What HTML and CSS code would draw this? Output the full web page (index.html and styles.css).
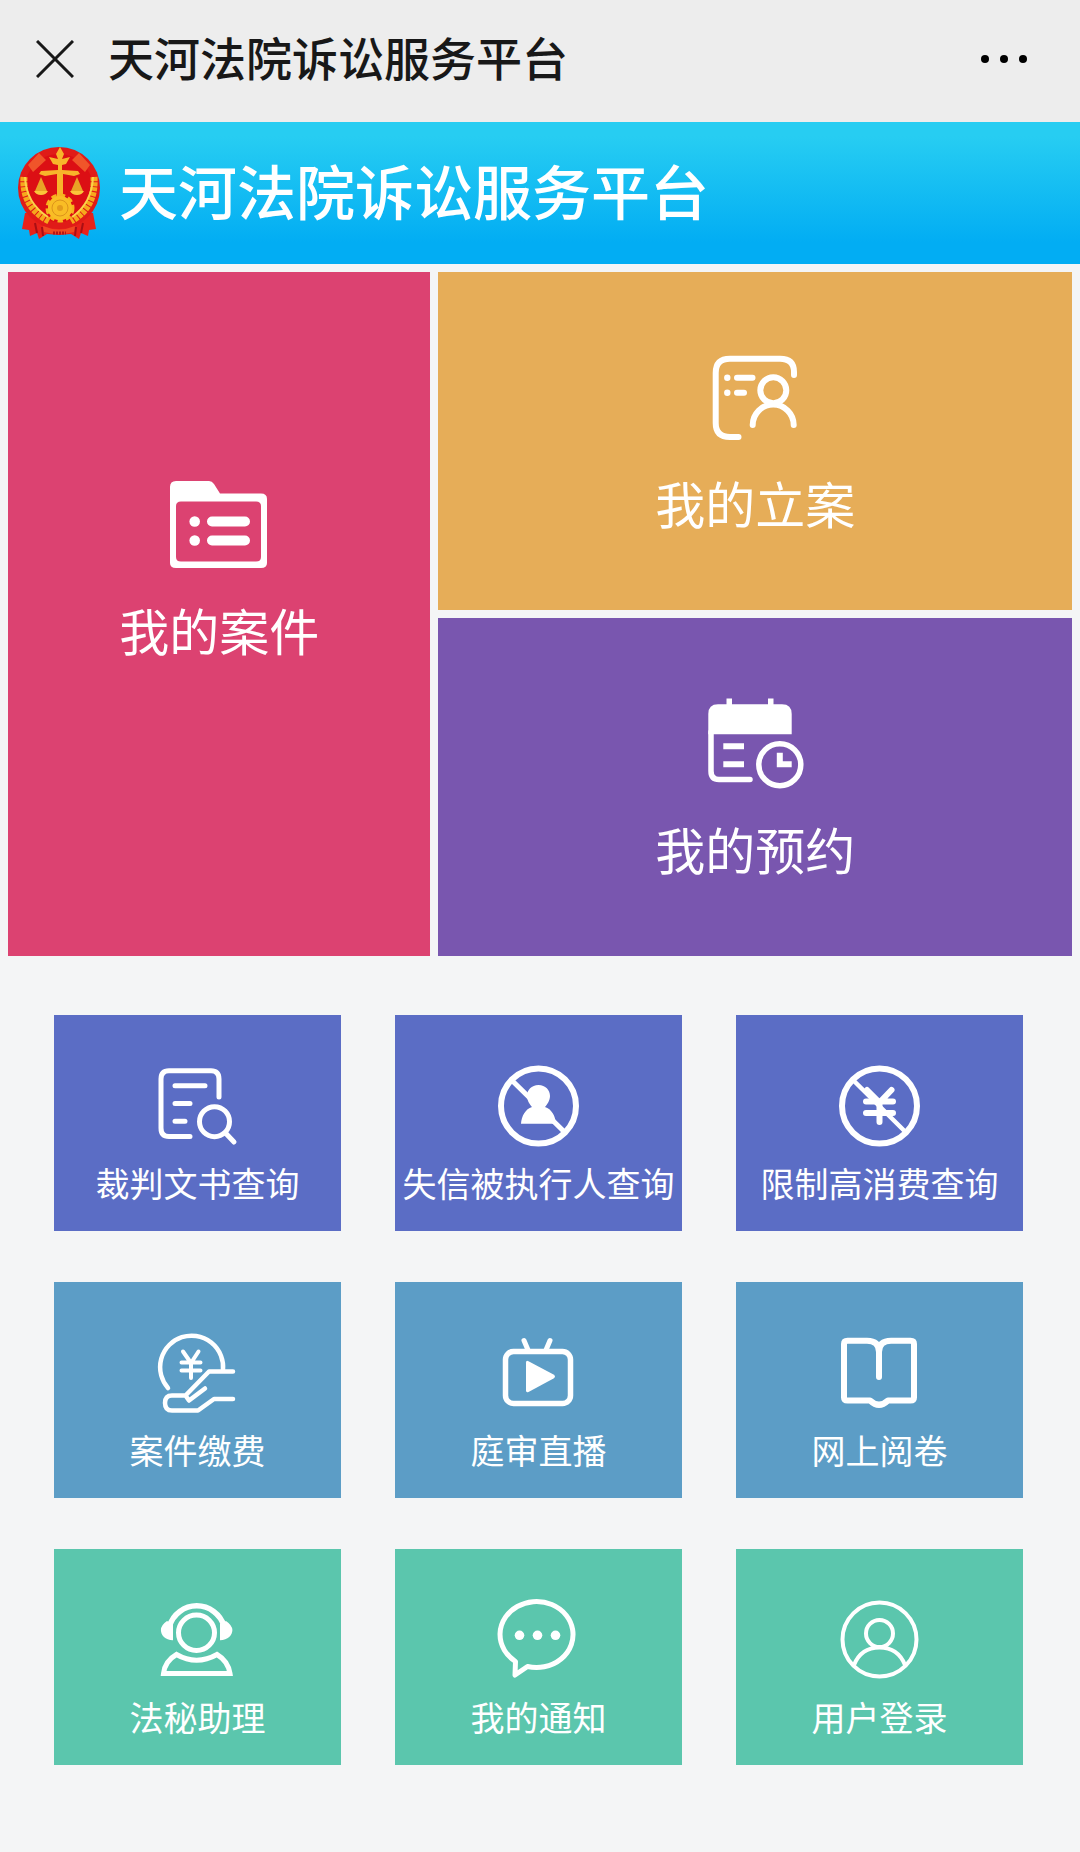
FILE: index.html
```html
<!DOCTYPE html>
<html lang="zh-CN">
<head>
  <meta charset="UTF-8">
  <meta name="viewport" content="width=device-width, initial-scale=1.0">
  <title>天河法院诉讼服务平台</title>
  <link rel="stylesheet" href="styles.css">
</head>
<body>
  <header class="topbar">
    <button type="button" class="btn-close" aria-label="关闭">
      <svg width="38" height="38" viewBox="0 0 38 38"><path d="M1 1L37 37M37 1L1 37"/></svg>
    </button>
    <h1>天河法院诉讼服务平台</h1>
    <button type="button" class="btn-more" aria-label="更多">
      <svg width="48" height="10" viewBox="0 0 48 10"><circle cx="5" cy="5" r="4"/><circle cx="24" cy="5" r="4"/><circle cx="43" cy="5" r="4"/></svg>
    </button>
  </header>

  <div class="banner">
    <svg class="emblem" width="84" height="96" viewBox="0 0 84 96">
      <path d="M8 68L5 84L12 85L13 91L20 88L22 94L30 89L42 90L54 89L62 94L64 88L71 91L72 85L79 84L76 68Z" fill="#e8221a"/>
      <path d="M18 78L20 88M25 82L26 91M66 78L64 88M59 82L58 91" stroke="#a90f14" stroke-width="2"/>
      <circle cx="42" cy="43" r="41" fill="#e01b18"/>
      <circle cx="42" cy="43" r="34" fill="#dc0f14"/>
      <path d="M11 20L22 8L29 15L16 27ZM73 20L62 8L55 15L68 27Z" fill="#f0552a"/>
      <path d="M7 32Q5 62 32 76" fill="none" stroke="#f6a81c" stroke-width="7" stroke-dasharray="4 1"/>
      <path d="M77 32Q79 62 54 76" fill="none" stroke="#f6a81c" stroke-width="7" stroke-dasharray="4 1"/>
      <path d="M8 32Q9 58 31 72M76 32Q75 58 55 72" fill="none" stroke="#fbd24a" stroke-width="2"/>
      <path d="M43 2L47 9L45 14L53 12L49 19L45 20V25L61 26L63 29L57 31L46 29V52H40V29L28 31L22 29L24 26L41 25V20L36 19L32 12L41 14L39 9Z" fill="#f8b52a"/>
      <path d="M24 32L30 46H18ZM60 32L66 46H54Z" fill="#e9a326"/>
      <path d="M17 46H31Q29 50 24 50Q19 50 17 46ZM53 46H67Q65 50 60 50Q55 50 53 46Z" fill="#fbc63a"/>
      <circle cx="43" cy="63" r="12" fill="#f7b31f" stroke="#f7b31f" stroke-width="5" stroke-dasharray="5 3"/>
      <circle cx="43" cy="63" r="12" fill="#f9bd25"/>
      <circle cx="43" cy="63" r="8" fill="none" stroke="#dd941b" stroke-width="1"/>
      <circle cx="43" cy="63" r="3" fill="#e39c1c"/>
      <path d="M26 81Q42 88 58 81L57 87Q42 91 27 87Z" fill="#f04a22"/>
      <path d="M36 88H49" stroke="#b51515" stroke-width="3" stroke-dasharray="2 1"/>
    </svg>
    <p class="banner-title">天河法院诉讼服务平台</p>
  </div>

  <main>
    <nav class="main-tiles">
      <a href="#" class="tile tile-case">
        <svg class="icon" viewBox="0 0 100 100">
          <path class="fill" fill-rule="evenodd" d="M7 6H40Q43 6 45 9L51 18.5H92Q98 18.5 98 24V88Q98 93 92 93H7Q1 93 1 88V12Q1 6 7 6ZM12 26.5Q7 26.5 7 31V82Q7 86.5 12 86.5H87Q92 86.5 92 82V31Q92 26.5 87 26.5Z"/>
          <circle class="fill" cx="25.7" cy="46.5" r="5.3"/><circle class="fill" cx="25.7" cy="65.5" r="5.3"/>
          <path d="M43 46.5H76M43 65.5H76" stroke-width="10"/>
        </svg>
        <span>我的案件</span>
      </a>
      <a href="#" class="tile tile-filing">
        <svg class="icon" viewBox="0 0 100 100" stroke-width="6">
          <path d="M89 27V24Q89 10.7 75 10.7H25Q10.7 10.7 10.7 25V75Q10.7 89 25 89H33.5"/>
          <circle class="fill" cx="22.3" cy="29.7" r="3.2"/><circle class="fill" cx="22.3" cy="44.7" r="3.2"/>
          <path d="M32 29.7H47.5M32 44.7H39"/>
          <circle cx="68.3" cy="42.2" r="13"/>
          <path d="M47.7 77A20.5 20.5 0 0 1 88.7 77"/>
        </svg>
        <span>我的立案</span>
      </a>
      <a href="#" class="tile tile-booking">
        <svg class="icon" viewBox="0 0 100 100" stroke-width="5.5">
          <path class="fill" d="M3.3 40.3V20Q3.3 10.3 13 10.3H21.5V4.5H27V10.3H63V4.5H68.5V10.3H77Q86.7 10.3 86.7 20V40.3Z"/>
          <path d="M6 38V77Q6 85.5 14 85.5H45"/>
          <path d="M18.3 52.3H39M18.3 70.3H39M74.8 58.7V70.3H86.7" stroke-width="6" stroke-linecap="butt" stroke-linejoin="miter"/>
          <circle cx="74.8" cy="70.7" r="21"/>
        </svg>
        <span>我的预约</span>
      </a>
    </nav>

    <nav class="services">
      <a href="#" class="service query">
        <svg class="icon" viewBox="0 0 100 100" stroke-width="5">
          <path d="M71 41V23Q71 14.8 63 14.8H21Q13 14.8 13 23V72Q13 80.5 21 80.5H42"/>
          <path d="M27 29.8H57M27 47.5H42M27 65.2H37"/>
          <circle cx="66.5" cy="65.7" r="15"/><path d="M77.5 77L86 86"/>
        </svg>
        <span>裁判文书查询</span>
      </a>
      <a href="#" class="service query">
        <svg class="icon" viewBox="0 0 100 100" stroke-width="6">
          <circle cx="49.5" cy="50" r="37.5"/>
          <path d="M23 24.5L75.5 76" stroke-width="5"/>
          <path class="fill" d="M49.5 29C56.5 29 61 34 61 40C61 45 57.5 49 56 51C62.5 53 66.5 60 67 67.8H32C32.500 60 36.500 53 43 51C41.500 49 38 45 38 40C38 34 42.500 29 49.500 29Z"/>
        </svg>
        <span>失信被执行人查询</span>
      </a>
      <a href="#" class="service query">
        <svg class="icon" viewBox="0 0 100 100" stroke-width="6">
          <circle cx="49.5" cy="50" r="37.5"/>
          <path d="M23.5 24.5L75 75.500" stroke-width="4.5"/>
          <path d="M37 34L49.500 46.500L61.500 34M49.500 46.500V66M36 45.500H63M36 57H63" stroke-width="6"/>
        </svg>
        <span>限制高消费查询</span>
      </a>
      <a href="#" class="service online">
        <svg class="icon" viewBox="0 0 100 100" stroke-width="4.5">
          <path d="M20 65A31.5 31.5 0 1 1 75 47"/>
          <path d="M35 28.500L43 40L50.500 28.500M43 40V55M33.500 39.5H52.500M33.500 47.5H52.500" stroke-width="4"/>
          <path d="M85 48.500H61L37.500 72.500H24Q17 72.500 17 80Q17 87.500 24 87.500H50L66 76H85M57 65.500L41 77.500L37.500 72.500"/>
        </svg>
        <span>案件缴费</span>
      </a>
      <a href="#" class="service online">
        <svg class="icon" viewBox="0 0 100 100" stroke-width="5.5">
          <rect x="16.500" y="28.500" width="65" height="52" rx="8"/>
          <path d="M35 17.5L39 27M61 17.5L57 27" stroke-width="5"/>
          <path class="fill" d="M37 39.5Q37 37 39.5 38.2L64.5 51.5Q67.500 53.5 64.500 55.5L39.500 69Q37 70 37 67.500Z"/>
        </svg>
        <span>庭审直播</span>
      </a>
      <a href="#" class="service online">
        <svg class="icon" viewBox="0 0 100 100" stroke-width="6">
          <path d="M49 54V29Q49 17.8 37 17.8H17.5Q14 17.8 14 21V74.5Q14 77.5 17.5 77.5H40Q49 86 58 77.5H80.5Q84 77.5 84 74.5V21Q84 17.8 80.5 17.8H61Q49 17.8 49 29"/>
        </svg>
        <span>网上阅卷</span>
      </a>
      <a href="#" class="service help">
        <svg class="icon" viewBox="0 0 100 100" stroke-width="5">
          <path d="M21.5 36A28.500 28.500 0 0 1 76 36" stroke-width="5.5"/>
          <path class="fill" d="M25 50.3C17 50 12.900 45 12.900 40Q13 35 19 31L25 34ZM72 50.3C80 50 84.400 45 84.400 40Q84 35 78 31L72 34Z"/>
          <ellipse cx="48.5" cy="42.7" rx="18" ry="17.700"/>
          <path d="M15.500 83.500Q17 71 28.500 64.500Q48.500 76 69 64.500Q80 71 82 83.500Z" stroke-linejoin="miter"/>
        </svg>
        <span>法秘助理</span>
      </a>
      <a href="#" class="service help">
        <svg class="icon" viewBox="0 0 100 100" stroke-width="5">
          <path d="M26.5 71.5A36.5 33 0 1 1 38.5 76.500L26 85Z"/>
          <circle class="fill" cx="30.5" cy="45.3" r="4.8"/><circle class="fill" cx="48.5" cy="45.3" r="4.8"/><circle class="fill" cx="66.5" cy="45.3" r="4.8"/>
        </svg>
        <span>我的通知</span>
      </a>
      <a href="#" class="service help">
        <svg class="icon" viewBox="0 0 100 100" stroke-width="4">
          <circle cx="49.500" cy="49.5" r="37"/><circle cx="49.5" cy="43.5" r="13.500"/>
          <path d="M24 75Q31 57.500 49.500 57.500Q68 57.500 75 75"/>
        </svg>
        <span>用户登录</span>
      </a>
    </nav>
  </main>
</body>
</html>
```
FILE: styles.css
```css
* { box-sizing: border-box; }
body { margin: 0; background: #f4f5f6; font-family: "Noto Sans CJK SC", sans-serif; }
h1, p { margin: 0; }
a { color: #fff; text-decoration: none; }
button { border: 0; padding: 0; background: none; cursor: pointer; }
svg { display: block; flex-shrink: 0; }

.topbar { display: flex; align-items: center; height: 122px; padding: 0 52px 4px 36px; background: #ededed; }
.topbar h1 { flex: 1; margin-left: 34px; padding-bottom: 6px; font-size: 46px; font-weight: 500; line-height: 60px; color: #181818; }
.btn-close svg { fill: none; stroke: #181818; stroke-width: 3; }
.btn-more svg { fill: #000; }

.banner { display: flex; align-items: center; gap: 18px; height: 142px; padding: 0 17px; background: linear-gradient(#27cdf2 10%, #02adf3 85%); }
.banner-title { padding-bottom: 6px; color: #fff; font-size: 59px; font-weight: 500; line-height: 72px; }

/* icons */
.icon { width: 100px; height: 100px; fill: none; stroke: #fff; stroke-linecap: round; stroke-linejoin: round; }
.icon .fill { fill: #fff; stroke: none; }

.main-tiles { display: grid; grid-template-columns: 2fr 3fr; grid-auto-rows: 338px; gap: 8px; padding: 8px; }
.tile { display: flex; flex-direction: column; align-items: center; gap: 18px; padding-top: 76px; font-size: 50px; line-height: 72px; }
.tile-case { grid-row: span 2; padding-top: 203px; background: #dc4271; }
.tile-filing { background: #e6ad58; }
.tile-booking { background: #7956af; }

.services { display: grid; grid-template-columns: repeat(3, 1fr); grid-auto-rows: 216px; gap: 51px 54px; padding: 51px 57px 88px 54px; }
.service { display: flex; flex-direction: column; align-items: center; gap: 3px; padding-top: 41px; font-size: 34px; line-height: 48px; white-space: nowrap; }
.query { background: #5b6dc5; }
.online { background: #5c9dc6; }
.help { background: #5bc6ad; }
```
